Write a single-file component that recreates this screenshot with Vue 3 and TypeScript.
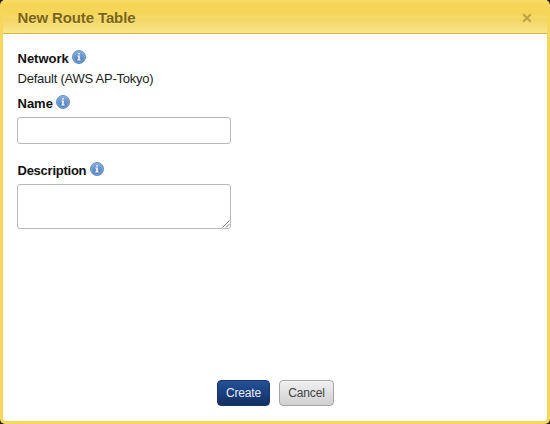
<script setup lang="ts">
import { ref } from 'vue'

const name = ref('')
const description = ref('')
</script>

<template>
  <div class="backdrop">
    <section class="dialog" role="dialog">
      <svg class="defs" width="0" height="0">
        <defs>
          <linearGradient id="ball" x1="0" y1="0" x2="0" y2="1">
            <stop offset="0" stop-color="#86aede" />
            <stop offset="1" stop-color="#4579b5" />
          </linearGradient>
          <symbol id="info" viewBox="0 0 14 14">
            <circle cx="7" cy="7" r="6.5" fill="url(#ball)" stroke="#5c88bb" stroke-width="0.9" />
            <circle cx="7" cy="7" r="5.5" fill="none" stroke="#8fb4de" stroke-width="0.6" />
            <path d="M6.2 3h1.6v1.5H6.2zM5.4 5.6h2.4v4h1v.9H5.2v-.9h1V6.4h-.8z" fill="#f4f8fd" />
          </symbol>
        </defs>
      </svg>
      <header class="head">
        <h1>New Route Table</h1>
        <button class="close" type="button">
          <svg width="10" height="10" viewBox="0 0 10 10">
            <path d="M1.2 1.2l7.6 7.6M8.8 1.2l-7.6 7.6" stroke="#bda546" stroke-width="2.1" />
          </svg>
        </button>
      </header>
      <form class="body" @submit.prevent>
        <div class="label network">Network <svg class="info"><use href="#info" /></svg></div>
        <div class="value">Default (AWS AP-Tokyo)</div>
        <label class="label name">Name <svg class="info"><use href="#info" /></svg></label>
        <input v-model="name" class="field" type="text" />
        <label class="label desc">Description <svg class="info"><use href="#info" /></svg></label>
        <div class="area">
          <textarea v-model="description" class="field"></textarea>
          <svg class="grip" width="8" height="8" viewBox="0 0 8 8">
            <path d="M.5 7.5l7-7M4 7.5L7.5 4" stroke="#858585" stroke-width="1" />
          </svg>
        </div>
        <footer class="actions">
          <button class="btn primary" type="submit">Create</button>
          <button class="btn" type="button">Cancel</button>
        </footer>
      </form>
    </section>
  </div>
</template>

<style>
body {
  margin: 0;
  overflow: hidden;
}
</style>

<style scoped>
.backdrop {
  height: 424px;
  background: #1c1b18;
  font-family: "Liberation Sans", Arial, sans-serif;
}
.dialog {
  box-sizing: border-box;
  height: 100%;
  display: flex;
  flex-direction: column;
  padding: 0 3px 3px;
  border-radius: 5px;
  background: #f6d75b;
}
.defs {
  position: absolute;
}
.head {
  box-sizing: border-box;
  flex: none;
  height: 34px;
  display: flex;
  align-items: center;
  justify-content: space-between;
  padding: 3px 15.5px 0 14.5px;
  border-bottom: 1px solid #dcb836;
  background: linear-gradient(#f7dc69 0, #f6d658 4px, #f6d658 14px, #f5da6c 17px, #f3d662 19px, #f8e489 32px);
}
h1 {
  margin: 0;
  font-size: 15px;
  line-height: 18px;
  letter-spacing: -0.12px;
  color: #7d6414;
  text-shadow: 0 1px 0 #f9e692;
}
.close {
  display: flex;
  padding: 0;
  border: 0;
  background: none;
}
.body {
  flex: 1;
  display: flex;
  flex-direction: column;
  align-items: flex-start;
  padding: 15px 13px 15px 14px;
  border-radius: 0 0 3px 3px;
  background: #fff;
}
.label {
  display: flex;
  align-items: center;
  gap: 4px;
  height: 18px;
  padding-left: 0.5px;
  font-size: 13px;
  font-weight: bold;
  color: #111;
}
.name {
  gap: 3.5px;
}
.network {
  gap: 3.5px;
}
.info {
  width: 14px;
  height: 14px;
  margin-top: -3px;
}
.value {
  height: 22px;
  padding-top: 4px;
  line-height: 16px;
  box-sizing: border-box;
  margin-bottom: 5px;
  padding-left: 0.5px;
  font-size: 13px;
  letter-spacing: -0.24px;
  color: #222;
}
.field {
  box-sizing: border-box;
  display: block;
  width: 214px;
  height: 27px;
  margin: 0;
  padding: 4px;
  border: 1px solid #b9b9b9;
  border-radius: 3px;
  background: #fff;
  font: 13px "Liberation Sans", Arial, sans-serif;
  outline: 0;
}
input.field {
  margin-top: 5px;
}
.desc {
  margin-top: 17px;
  letter-spacing: -0.25px;
}
.area {
  position: relative;
  margin-top: 5px;
}
textarea.field {
  height: 45px;
  resize: none;
}
.grip {
  position: absolute;
  right: 1px;
  bottom: 1px;
}
.actions {
  align-self: center;
  display: flex;
  gap: 9px;
  margin-top: auto;
}
.btn {
  box-sizing: border-box;
  width: 55px;
  height: 26px;
  padding: 0;
  border: 1px solid #a5a5a5;
  border-radius: 4px;
  background: linear-gradient(#f0f0f0, #d0d0d0);
  box-shadow: inset 0 1px 0 #f7f7f7;
  font: 12px/22px "Liberation Sans", Arial, sans-serif;
  letter-spacing: -0.15px;
  color: #444;
}
.primary {
  width: 53px;
  border-color: #17366b;
  background: linear-gradient(#23509a, #132f62);
  box-shadow: none;
  color: #e6ebf4;
}
</style>
